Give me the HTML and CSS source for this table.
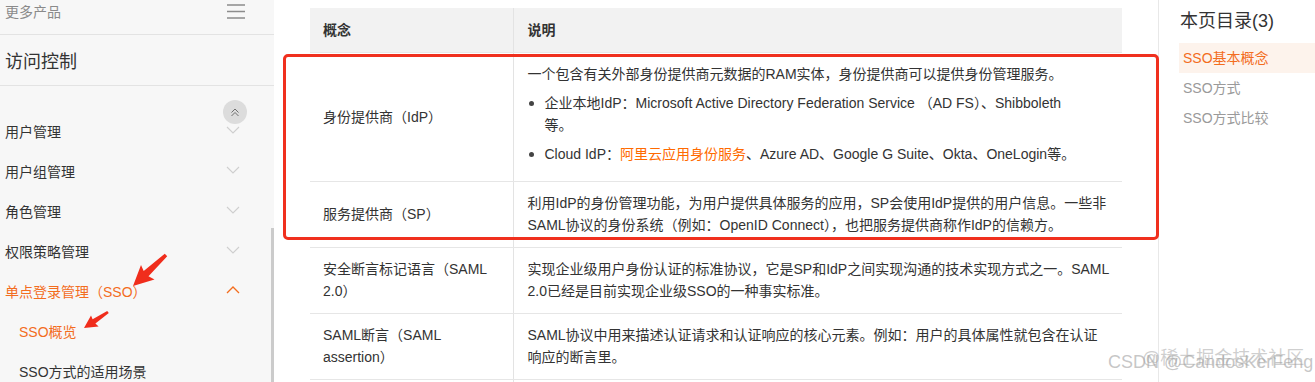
FILE: index.html
```html
<!DOCTYPE html>
<html lang="zh-CN">
<head>
<meta charset="utf-8">
<title>SSO概览 - 访问控制</title>
<link rel="stylesheet" href="styles.css">
</head>
<body>
<div class="page">
  <aside class="sidebar">
    <div class="more">
      <span class="more-text">更多产品</span>
      <svg class="burger" width="18" height="16" viewBox="0 0 18 16"><path d="M0 1h18M0 7.5h18M0 14h18" stroke="#8c8c8c" stroke-width="1.6" fill="none"/></svg>
    </div>
    <div class="title">访问控制</div>
    <ul class="nav">
      <li class="nav-item"><span>用户管理</span><svg class="chev" width="14" height="8" viewBox="0 0 14 8"><path d="M1 1l6 6 6-6" stroke="#cfcfcf" stroke-width="1.1" fill="none"/></svg></li>
      <li class="nav-item"><span>用户组管理</span><svg class="chev" width="14" height="8" viewBox="0 0 14 8"><path d="M1 1l6 6 6-6" stroke="#cfcfcf" stroke-width="1.1" fill="none"/></svg></li>
      <li class="nav-item"><span>角色管理</span><svg class="chev" width="14" height="8" viewBox="0 0 14 8"><path d="M1 1l6 6 6-6" stroke="#cfcfcf" stroke-width="1.1" fill="none"/></svg></li>
      <li class="nav-item"><span>权限策略管理</span><svg class="chev" width="14" height="8" viewBox="0 0 14 8"><path d="M1 1l6 6 6-6" stroke="#cfcfcf" stroke-width="1.1" fill="none"/></svg></li>
      <li class="nav-item active"><span>单点登录管理（SSO）</span><svg class="chev" width="14" height="8" viewBox="0 0 14 8"><path d="M1 7l6-6 6 6" stroke="#f36d1e" stroke-width="1.3" fill="none"/></svg></li>
      <li class="nav-item sub active"><span>SSO概览</span></li>
      <li class="nav-item sub"><span>SSO方式的适用场景</span></li>
    </ul>
    <div class="totop"><svg width="10" height="9" viewBox="0 0 10 9"><path d="M1.5 4.5L5 1l3.5 3.5M1.5 8L5 4.5 8.5 8" stroke="#6f6f6f" stroke-width="1" fill="none"/></svg></div>
    <div class="scroll-thumb"></div>
  </aside>

  <main class="main">
    <table class="doc-table">
      <colgroup><col class="c1"><col class="c2"></colgroup>
      <thead>
        <tr><th>概念</th><th class="desc">说明</th></tr>
      </thead>
      <tbody>
        <tr>
          <td>身份提供商（IdP）</td>
          <td class="desc">
            <p>一个包含有关外部身份提供商元数据的RAM实体，身份提供商可以提供身份管理服务。</p>
            <ul class="bullets">
              <li>企业本地IdP：Microsoft Active Directory Federation Service （AD FS）、Shibboleth<br>等。</li>
              <li>Cloud IdP：<a class="link">阿里云应用身份服务</a>、Azure AD、Google G Suite、Okta、OneLogin等。</li>
            </ul>
          </td>
        </tr>
        <tr>
          <td>服务提供商（SP）</td>
          <td class="desc">利用IdP的身份管理功能，为用户提供具体服务的应用，SP会使用IdP提供的用户信息。一些非<br>SAML协议的身份系统（例如：OpenID Connect），也把服务提供商称作IdP的信赖方。</td>
        </tr>
        <tr>
          <td>安全断言标记语言（SAML<br>2.0）</td>
          <td class="desc">实现企业级用户身份认证的标准协议，它是SP和IdP之间实现沟通的技术实现方式之一。SAML<br>2.0已经是目前实现企业级SSO的一种事实标准。</td>
        </tr>
        <tr>
          <td>SAML断言（SAML<br>assertion）</td>
          <td class="desc">SAML协议中用来描述认证请求和认证响应的核心元素。例如：用户的具体属性就包含在认证<br>响应的断言里。</td>
        </tr>
        <tr class="tail-row">
          <td></td>
          <td class="desc"></td>
        </tr>
      </tbody>
    </table>
  </main>

  <nav class="toc">
    <div class="toc-title">本页目录(3)</div>
    <ul class="toc-list">
      <li class="toc-item current">SSO基本概念</li>
      <li class="toc-item">SSO方式</li>
      <li class="toc-item">SSO方式比较</li>
    </ul>
  </nav>
</div>

<div class="mark-box"></div>
<svg class="mark-arrows" width="200" height="382" viewBox="0 0 200 382">
  <polygon fill="#f02d1c" points="167.2,256.3 148.5,276.3 154.5,279.5 133,286 141,265 143.7,271.1 164.8,253.7"/>
  <polygon fill="#f02d1c" points="108.8,313.1 95.4,323.4 98.6,326.4 84,328 91,315.4 92.6,319.2 107.2,310.9"/>
</svg>
<div class="watermark wm-a">CSDN @CandosKerFeng</div>
<div class="watermark wm-b">@稀土掘金技术社区</div>
</body>
</html>
```

FILE: styles.css
```css
* { box-sizing: border-box; }
html, body { margin: 0; padding: 0; }
body {
  font-family: "Liberation Sans", "Noto Sans CJK SC", sans-serif;
  font-size: 14px;
  color: #333;
  background: #fff;
  width: 1315px;
  height: 382px;
  overflow: hidden;
  position: relative;
}
ul { list-style: none; margin: 0; padding: 0; }

.page {
  display: flex;
  height: 382px;
  overflow: hidden;
}

/* sidebar */
.sidebar {
  position: relative;
  width: 274px;
  flex: none;
  background: #f7f7f7;
  height: 100%;
  overflow: hidden;
}
.more {
  height: 35px;
  padding: 0 29px 11px 5px;
  border-bottom: 1px solid #e3e3e3;
  display: flex;
  align-items: center;
  justify-content: space-between;
}
.more-text { color: #8a8a8a; font-size: 14px; line-height: 20px; }
.burger { display: block; }
.title {
  height: 51px;
  padding-left: 5px;
  display: flex;
  align-items: center;
  font-size: 18px;
  color: #333;
  border-bottom: 1px solid #e3e3e3;
}
.nav { padding-top: 25px; }
.nav-item {
  height: 40px;
  display: flex;
  align-items: center;
  justify-content: space-between;
  padding: 0 34px 0 5px;
  color: #333;
}
.nav-item .chev { display: block; margin-top: -2px; }
.nav-item.active { color: #f36d1e; }
.nav-item.sub { padding-left: 19px; }
.totop {
  position: absolute;
  left: 223px;
  top: 100px;
  width: 24px;
  height: 24px;
  border-radius: 50%;
  background: #dcdcdc;
  display: flex;
  align-items: center;
  justify-content: center;
}
.totop svg { display: block; }
.scroll-thumb {
  position: absolute;
  right: 0;
  top: 228px;
  width: 3px;
  bottom: 0;
  background: #cbcbcb;
}

/* main */
.main {
  width: 884px;
  flex: none;
  padding: 8px 36px 0 36px;
  background: #fff;
  overflow: hidden;
}
.doc-table {
  width: 812px;
  border-collapse: collapse;
  table-layout: fixed;
}
.c1 { width: 203px; }
.c2 { width: 609px; }
.doc-table th {
  background: #f2f2f2;
  text-align: left;
  font-weight: 600;
  line-height: 22px;
  padding: 11px 13px;
  border-bottom: 1px solid #e8e8e8;
  color: #333;
}
.doc-table td {
  line-height: 22px;
  padding: 10px 13px 11px 13px;
  border-bottom: 1px solid #e6e6e6;
  vertical-align: middle;
  color: #333;
}
.doc-table .desc {
  border-left: 1px solid #e3e3e3;
  padding-left: 14px;
  padding-right: 6px;
}
.doc-table td.desc { vertical-align: top; }
.doc-table .tail-row td { height: 4px; padding: 0; border-bottom: 0; }
.desc p { margin: 0; }
.bullets { margin: 0 0 5px 0; }
.bullets li {
  position: relative;
  padding-left: 17px;
  margin-top: 7px;
}
.bullets li::before {
  content: "";
  position: absolute;
  left: 1px;
  top: 9px;
  width: 5px;
  height: 5px;
  border-radius: 50%;
  background: #444;
}
.link { color: #ff6a00; text-decoration: none; }

/* toc */
.toc {
  flex: 1;
  border-left: 1px solid #e8e8e8;
  padding: 9px 0 0 20px;
}
.toc-title {
  font-size: 18px;
  line-height: 24px;
  color: #333;
  padding-left: 1px;
  margin-bottom: 10px;
}
.toc-item {
  height: 30px;
  line-height: 30px;
  padding-left: 4px;
  color: #9a9a9a;
}
.toc-item.current {
  background: #fdf3ec;
  color: #f36d1e;
}

/* annotations */
.mark-box {
  position: absolute;
  left: 283px;
  top: 54px;
  width: 876px;
  height: 186px;
  border: 3px solid #f0301e;
  border-radius: 5px;
  pointer-events: none;
}
.mark-arrows {
  position: absolute;
  left: 0;
  top: 0;
  pointer-events: none;
}
.watermark {
  position: absolute;
  font-size: 18px;
  line-height: 22px;
  color: rgba(150, 150, 150, 0.55);
  white-space: nowrap;
  pointer-events: none;
}
.wm-a { left: 1108px; top: 351px; }
.wm-b { left: 1142px; top: 347px; color: rgba(160, 160, 160, 0.5); }
```
